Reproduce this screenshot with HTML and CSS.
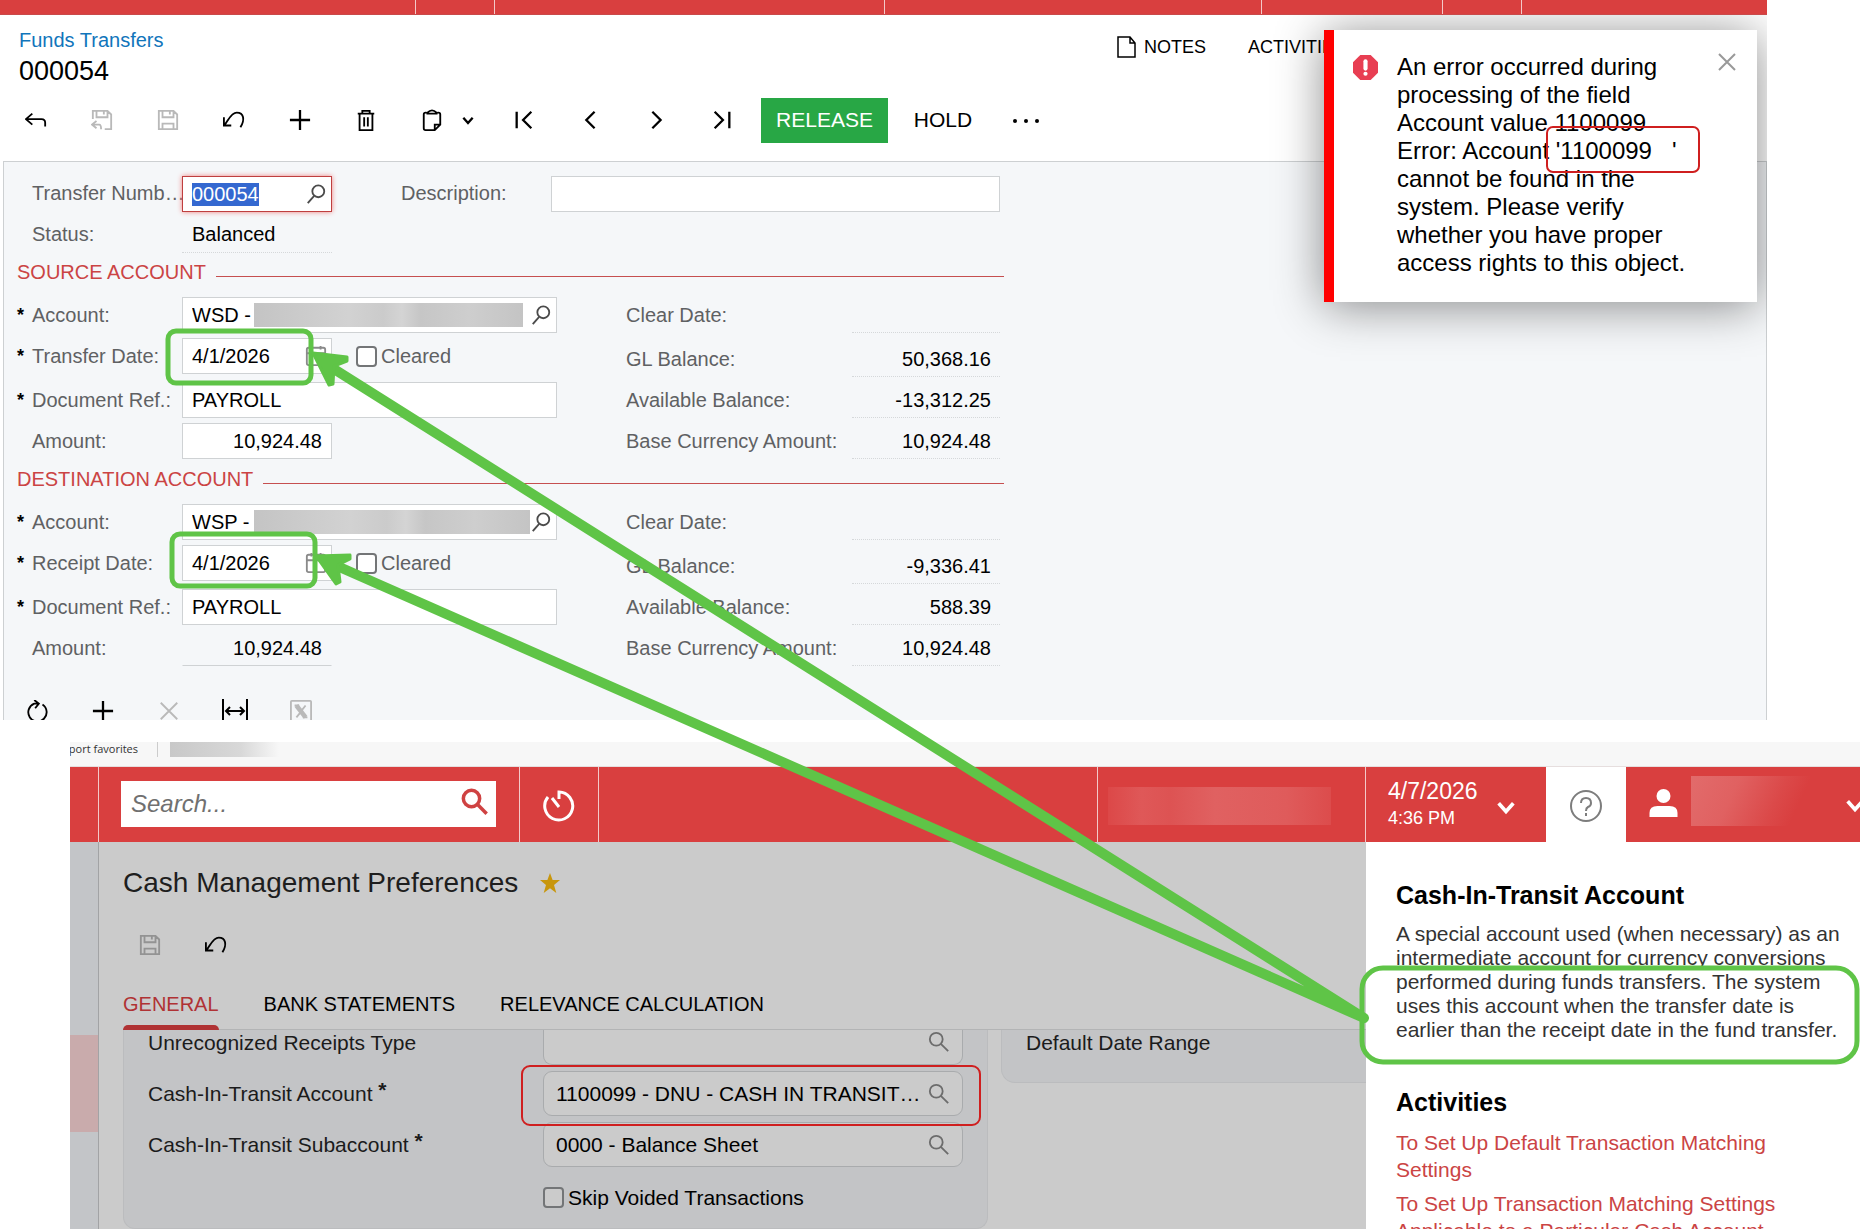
FILE: index.html
```html
<!DOCTYPE html>
<html lang="en">
<head>
  <meta charset="UTF-8" />
  <title>Funds Transfers</title>
  <link rel="stylesheet" href="styles.css">
</head>
<body>
  <!-- Shared icon shapes -->
  <svg class="sprite" aria-hidden="true">
    <symbol id="i-save" viewBox="0 0 24 24"><path d="M2 2h16l4 4v16H2zM6 2v7h12V2M14 2v4M6 22v-6h12v6"/></symbol>
    <symbol id="i-undo" viewBox="0 0 24 24"><path d="M2 17C6 12 9 4 15 4c8 0 9 8 4 16M1 9v9h8"/></symbol>
    <symbol id="i-plus" viewBox="0 0 24 24"><path d="M12 1v22M1 12h22"/></symbol>
    <symbol id="i-find" viewBox="0 0 24 24"><circle cx="14.500" cy="9" r="6.500"/><path d="M10 14l-7 8"/></symbol>
    <symbol id="i-search" viewBox="0 0 24 24"><circle cx="9" cy="9" r="7"/><path d="M14 14l8 8"/></symbol>
    <symbol id="i-cal" viewBox="0 0 24 24"><rect x="2" y="3" width="20" height="19" rx="2"/><path d="M2 9h20M7 1v4M17 1v4"/></symbol>
    <symbol id="i-down" viewBox="0 0 24 24"><path d="M4 8l8 9 8-9"/></symbol>
  </svg>

  <!-- Funds transfer form -->
  <div class="transfers">
    <div class="top-strip">
      <span class="strip-a"></span><span class="strip-b"></span><span class="strip-c"></span><span class="strip-d"></span><span class="strip-e"></span><span class="strip-b"></span>
    </div>

    <div class="transfers-body">
      <div class="page-head">
        <div>
          <a class="crumb" href="#">Funds Transfers</a>
          <h1 class="record-title">000054</h1>
        </div>
        <div class="head-links">
          <button class="head-link"><svg class="note-icon" viewBox="0 0 20 22"><path d="M1 1h12l5 6v14H1zM13 1v6h5"/></svg>NOTES</button>
          <button class="head-link">ACTIVITIES</button>
        </div>
      </div>

      <div class="toolbar main-toolbar">
        <button class="tool" aria-label="Back"><svg class="icon" viewBox="0 0 24 24"><path d="M8 5l-7 6 7 6M1 11h17q4 0 4 4v4"/></svg></button>
        <button class="tool muted" aria-label="Save and close"><svg class="icon" viewBox="0 0 24 24"><path d="M2 11V2h16l4 4v16h-7M6 2v7h12V2M14 2v4M6 13l-5 4 5 4M1 17h8q2 0 2 5"/></svg></button>
        <button class="tool muted" aria-label="Save"><svg class="icon"><use href="#i-save"/></svg></button>
        <button class="tool" aria-label="Undo"><svg class="icon"><use href="#i-undo"/></svg></button>
        <button class="tool" aria-label="Add"><svg class="icon bold"><use href="#i-plus"/></svg></button>
        <button class="tool" aria-label="Delete"><svg class="icon" viewBox="0 0 24 24"><path d="M3 5h18M8 5V2h8v3M5 5v18h14V5M10 9v10M14 9v10"/></svg></button>
        <button class="tool clip" aria-label="Clipboard">
          <svg class="icon" viewBox="0 0 24 24"><path d="M6 4H5q-2 0-2 2v15q0 2 2 2h10l6-6V6q0-2-2-2h-1M7 5V4q5-5 10 0v1zM15 23v-6h6"/></svg>
          <svg class="icon small bold"><use href="#i-down"/></svg>
        </button>
        <button class="tool" aria-label="First"><svg class="icon bold" viewBox="0 0 24 24"><path d="M4 3v18M20 3l-9 9 9 9"/></svg></button>
        <button class="tool" aria-label="Previous"><svg class="icon bold" viewBox="0 0 24 24"><path d="M17 3l-9 9 9 9"/></svg></button>
        <button class="tool" aria-label="Next"><svg class="icon bold" viewBox="0 0 24 24"><path d="M8 3l9 9-9 9"/></svg></button>
        <button class="tool" aria-label="Last"><svg class="icon bold" viewBox="0 0 24 24"><path d="M20 3v18M4 3l9 9-9 9"/></svg></button>
        <button class="release">RELEASE</button>
        <button class="hold">HOLD</button>
        <button class="tool more" aria-label="More"><svg class="dots" viewBox="0 0 28 6"><circle cx="3" cy="4" r="2"/><circle cx="14" cy="4" r="2"/><circle cx="25" cy="4" r="2"/></svg></button>
      </div>

      <div class="panel">
        <div class="form">
          <div class="row">
            <label class="label" for="nbr"><span class="req"></span>Transfer Numb…</label>
            <div class="field short active"><input id="nbr" type="text" value="000054"><button class="pick" aria-label="Find"><svg class="icon"><use href="#i-find"/></svg></button></div>
            <label class="label desc" for="descr">Description:</label>
            <div class="field descr"><input id="descr" type="text"></div>
          </div>
          <div class="row">
            <span class="label"><span class="req"></span>Status:</span>
            <span class="static status">Balanced</span>
          </div>

          <h2 class="section-title">SOURCE ACCOUNT</h2>
          <div class="account">
            <label class="label" for="srcAcct"><span class="req">*</span>Account:</label>
            <div class="field"><input id="srcAcct" class="code" type="text" value="WSD -"><span class="redacted"></span><button class="pick wide" aria-label="Find"><svg class="icon"><use href="#i-find"/></svg></button></div>
            <span class="label right">Clear Date:</span>
            <span class="static"></span>

            <label class="label top" for="srcDate"><span class="req">*</span>Transfer Date:</label>
            <div class="date-cell">
              <div class="field short"><input id="srcDate" type="text" value="4/1/2026"><button class="pick cal" aria-label="Calendar"><svg class="icon"><use href="#i-cal"/></svg></button></div>
              <label class="check"><input type="checkbox">Cleared</label>
            </div>
            <span class="label right bottom">GL Balance:</span>
            <span class="static bottom">50,368.16</span>

            <label class="label" for="srcRef"><span class="req">*</span>Document Ref.:</label>
            <div class="field"><input id="srcRef" type="text" value="PAYROLL"></div>
            <span class="label right">Available Balance:</span>
            <span class="static">-13,312.25</span>

            <label class="label" for="srcAmt"><span class="req"></span>Amount:</label>
            <div class="field short"><input id="srcAmt" class="num" type="text" value="10,924.48"></div>
            <span class="label right">Base Currency Amount:</span>
            <span class="static">10,924.48</span>
          </div>

          <h2 class="section-title">DESTINATION ACCOUNT</h2>
          <div class="account">
            <label class="label" for="dstAcct"><span class="req">*</span>Account:</label>
            <div class="field"><input id="dstAcct" class="code" type="text" value="WSP -"><span class="redacted"></span><button class="pick" aria-label="Find"><svg class="icon"><use href="#i-find"/></svg></button></div>
            <span class="label right">Clear Date:</span>
            <span class="static"></span>

            <label class="label top" for="dstDate"><span class="req">*</span>Receipt Date:</label>
            <div class="date-cell">
              <div class="field short"><input id="dstDate" type="text" value="4/1/2026"><button class="pick cal" aria-label="Calendar"><svg class="icon"><use href="#i-cal"/></svg></button></div>
              <label class="check"><input type="checkbox">Cleared</label>
            </div>
            <span class="label right bottom">GL Balance:</span>
            <span class="static bottom">-9,336.41</span>

            <label class="label" for="dstRef"><span class="req">*</span>Document Ref.:</label>
            <div class="field"><input id="dstRef" type="text" value="PAYROLL"></div>
            <span class="label right">Available Balance:</span>
            <span class="static">588.39</span>

            <label class="label" for="dstAmt"><span class="req"></span>Amount:</label>
            <div class="field short readonly"><input id="dstAmt" class="num" type="text" value="10,924.48" readonly></div>
            <span class="label right">Base Currency Amount:</span>
            <span class="static">10,924.48</span>
          </div>
        </div>

        <div class="toolbar grid-toolbar">
          <button class="tool" aria-label="Refresh"><svg class="icon" viewBox="0 0 24 24"><path d="M18 5a10 10 0 1 1-9-1h5M9 0l5 4-4 5"/></svg></button>
          <button class="tool" aria-label="Add row"><svg class="icon bold"><use href="#i-plus"/></svg></button>
          <button class="tool muted" aria-label="Delete row"><svg class="icon" viewBox="0 0 24 24"><path d="M3 3l18 18M21 3L3 21"/></svg></button>
          <button class="tool" aria-label="Fit columns"><svg class="icon wide-icon" viewBox="0 0 26 24"><path d="M1 0v24M25 0v24M4 12h18M8 8l-4 4 4 4M18 8l4 4-4 4"/></svg></button>
          <button class="tool muted" aria-label="Export to Excel"><svg class="icon" viewBox="0 0 24 24"><rect x="1" y="1" width="22" height="23" rx="1"/><path class="thick" d="M7 6l10 13"/><path d="M17 6l-4 5M11 14l-4 5M5 6h5M14 19h5"/></svg></button>
        </div>
      </div>

      <!-- Error message -->
      <div class="toast" role="alert">
        <svg class="toast-icon" viewBox="0 0 24 24"><path class="oct" d="M7 0h10l7 7v10l-7 7H7l-7-7V7z"/><rect x="10" y="4" width="4" height="11" rx="2"/><circle cx="12" cy="18" r="2"/></svg>
        <p class="toast-text">An error occurred during processing of the field Account value 1100099 Error: Account '1100099&nbsp;&nbsp; ' cannot be found in the system. Please verify whether you have proper access rights to this object.</p>
        <button class="toast-close" aria-label="Close"><svg viewBox="0 0 18 18"><path d="M1 1l16 16M17 1L1 17"/></svg></button>
      </div>
    </div>
  </div>

  <!-- Preferences screen -->
  <div class="prefs">
    <div class="favorites">
      <span class="fav-text">Import favorites</span>
      <span class="fav-redacted"></span>
    </div>

    <div class="app-bar">
      <div class="bar-edge"></div>
      <div class="bar-search">
        <div class="search-box"><input type="text" placeholder="Search..." aria-label="Search"><button aria-label="Search"><svg class="icon"><use href="#i-search"/></svg></button></div>
      </div>
      <button class="bar-recent" aria-label="Recent"><svg viewBox="0 0 34 34"><path d="M6 8a14 14 0 1 0 11-5v7M10 9l7 9"/></svg></button>
      <div class="bar-space"></div>
      <div class="bar-company"><span class="blurred"></span></div>
      <button class="bar-date"><span><span class="date">4/7/2026</span><span class="time">4:36 PM</span></span><svg class="icon"><use href="#i-down"/></svg></button>
      <button class="bar-help" aria-label="Help"><svg viewBox="0 0 34 34"><circle cx="17" cy="17" r="15"/><path d="M12 14q0-5 5-5t5 5q0 3-3 4-2 1-2 4M17 24v3"/></svg></button>
      <button class="bar-user" aria-label="User"><svg class="user-icon" viewBox="0 0 28 28"><circle cx="14" cy="7" r="7"/><path d="M0 28v-4q0-7 8-7h12q8 0 8 7v4z"/></svg><span class="blurred"></span><svg class="icon"><use href="#i-down"/></svg></button>
    </div>

    <div class="prefs-body">
      <div class="side-nav"><div class="side-current"></div></div>

      <div class="prefs-main">
        <h1 class="prefs-title">Cash Management Preferences <svg viewBox="0 0 20 20"><path d="M10 0l2.600 7H20l-6 5 2.300 8L10 15.200 3.700 20 6 12 0 7h7.400z"/></svg></h1>
        <div class="toolbar prefs-toolbar">
          <button class="tool muted" aria-label="Save"><svg class="icon"><use href="#i-save"/></svg></button>
          <button class="tool" aria-label="Undo"><svg class="icon"><use href="#i-undo"/></svg></button>
        </div>
        <div class="tabs">
          <button class="tab current">GENERAL</button>
          <button class="tab">BANK STATEMENTS</button>
          <button class="tab">RELEVANCE CALCULATION</button>
        </div>
        <div class="cards">
          <div class="card card-left">
            <div class="pref-row cut">
              <label for="urt">Unrecognized Receipts Type</label>
              <div class="pref-field"><input id="urt" type="text"><svg class="icon"><use href="#i-search"/></svg></div>
            </div>
            <div class="pref-row">
              <label for="cit">Cash-In-Transit Account <b>*</b></label>
              <div class="pref-field"><input id="cit" type="text" value="1100099 - DNU - CASH IN TRANSIT…"><svg class="icon"><use href="#i-search"/></svg></div>
            </div>
            <div class="pref-row">
              <label for="cis">Cash-In-Transit Subaccount <b>*</b></label>
              <div class="pref-field"><input id="cis" type="text" value="0000 - Balance Sheet"><svg class="icon"><use href="#i-search"/></svg></div>
            </div>
            <label class="check skip"><input type="checkbox">Skip Voided Transactions</label>
          </div>
          <div class="card card-right">Default Date Range</div>
        </div>
      </div>

      <div class="help">
        <h2>Cash-In-Transit Account</h2>
        <p>A special account used (when necessary) as an intermediate account for currency conversions performed during funds transfers. The system uses this account when the transfer date is earlier than the receipt date in the fund transfer.</p>
        <h2>Activities</h2>
        <a href="#">To Set Up Default Transaction Matching Settings</a>
        <a href="#">To Set Up Transaction Matching Settings Applicable to a Particular Cash Account</a>
      </div>
    </div>
  </div>

  <!-- Markup drawn over both screens -->
  <svg class="markup" viewBox="0 0 1860 1229" aria-hidden="true">
    <g class="green">
      <rect x="168" y="331" width="143" height="52" rx="8"/>
      <rect x="172" y="534" width="143" height="52" rx="8"/>
      <rect x="1362" y="968" width="495" height="94" rx="21"/>
      <path class="shaft" d="M326 364L1364 1018L328 562"/>
      <path class="head" d="M313 353L347 357L347 361L334 366L333 384L329 385Z"/>
      <path class="head" d="M316 556L350 555L350 559L338 565L340 582L336 584Z"/>
    </g>
    <g class="red">
      <rect x="1547" y="127" width="152" height="45" rx="6"/>
      <rect x="522" y="1066" width="458" height="59" rx="8"/>
    </g>
  </svg>

  <script>
    // transfer number starts selected
    const nbr = document.getElementById('nbr');
    nbr.focus();
    nbr.select();
  </script>
</body>
</html>
```

FILE: styles.css
```css
* {
  margin: 0;
  padding: 0;
  box-sizing: border-box;
}

body {
  position: relative;
  display: flex;
  flex-direction: column;
  height: 100vh;
  overflow: hidden;
  background-color: #fff;
  color: #000;
  font-family: "Liberation Sans", Arial, sans-serif;
  font-size: 20px;
  line-height: 24px;
}

button,
input {
  font: inherit;
  color: inherit;
  border: none;
  background: none;
  outline: none;
}

svg {
  display: block;
  flex: none;
  fill: none;
  stroke: currentColor;
}

a {
  text-decoration: none;
}

.sprite {
  position: absolute;
  width: 0;
  height: 0;
}

.icon {
  width: 22px;
  height: 22px;
  stroke-width: 2;
}

.icon.bold {
  stroke-width: 2.5;
}

.icon.small {
  width: 14px;
  height: 14px;
  stroke-width: 4;
}

.icon.wide-icon {
  width: 26px;
  height: 24px;
}

/* Funds transfer window */
.transfers {
  width: 95%;
  flex: none;
}

.top-strip {
  display: flex;
  height: 15px;
  background-color: #d93f3f;
  border-bottom: 1px solid #c94a4a;
}

.top-strip span {
  border-right: 1px solid #f3c9c9;
}

.strip-a { width: 416px; }
.strip-b { width: 79px; }
.strip-c { width: 390px; }
.strip-d { width: 377px; }
.strip-e { width: 181px; }

.transfers-body {
  position: relative;
  overflow: hidden;
}

.page-head {
  display: flex;
  justify-content: space-between;
  padding: 13px 421px 0 19px;
}

.crumb {
  display: block;
  color: #1175bb;
}

.record-title {
  margin-top: 3px;
  font-size: 27px;
  font-weight: normal;
  line-height: 32px;
}

.head-links {
  display: flex;
  align-items: flex-start;
  gap: 42px;
  padding-top: 7px;
}

.head-link {
  display: flex;
  align-items: center;
  gap: 7px;
  font-size: 18px;
}

.note-icon {
  width: 20px;
  height: 22px;
  stroke-width: 1.5;
}

.toolbar {
  display: flex;
}

.main-toolbar {
  height: 45px;
  margin: 11px 0 18px 3px;
}

.main-toolbar button {
  padding-bottom: 2px;
}

.tool {
  display: flex;
  align-items: center;
  justify-content: center;
  width: 66px;
}

.muted {
  color: #b9b9b9;
}

.clip {
  justify-content: flex-start;
  width: 92px;
  padding-left: 22px;
  gap: 18px;
}

.release {
  width: 127px;
  margin-left: 6px;
  background-color: #28a745;
  color: #fff;
  font-size: 21px;
}

.hold {
  width: 110px;
  font-size: 21px;
}

.more {
  width: 56px;
}

.dots {
  width: 28px;
  height: 6px;
  fill: #000;
  stroke: none;
}

.panel {
  margin-left: 3px;
  border: 1px solid #cdd0d2;
  border-bottom: none;
  background-color: #f5f7f9;
}

.form {
  width: 1000px;
  padding: 14px 0 0 13px;
}

.row {
  display: flex;
  height: 36px;
  margin-bottom: 5px;
}

.label {
  display: flex;
  align-items: center;
  flex: none;
  width: 165px;
  height: 36px;
  color: #5f6163;
  white-space: nowrap;
}

.row .label,
.row input {
  padding-bottom: 2px;
}

.label.right {
  padding-left: 69px;
  width: auto;
}

.label.desc {
  width: 150px;
  margin-left: 69px;
}

.top {
  align-self: start;
}

.bottom {
  align-self: end;
}

.req {
  flex: none;
  width: 15px;
  color: #000;
  font-size: 18px;
  font-weight: bold;
}

.field {
  display: flex;
  align-items: center;
  height: 36px;
  border: 1px solid #cfd2d4;
  background-color: #fff;
}

.field input {
  flex: 1;
  min-width: 0;
  height: 34px;
  padding: 0 9px;
}

.field.short {
  width: 150px;
}

.field.descr {
  width: 449px;
}

.field.active {
  border-color: #bf3f3f;
  box-shadow: 0 0 5px #f08080;
}

.field.readonly {
  background: none;
  border-color: transparent transparent #cfd2d4;
}

.field input::selection {
  background-color: #3468d0;
  color: #fff;
}

.field .code {
  flex: none;
  width: 71px;
  padding-right: 0;
}

.field .num {
  text-align: right;
}

.redacted {
  flex: 1;
  height: 24px;
  background: linear-gradient(90deg, #c4c4c4, #d2d2d2 35%, #cbcbcb 48%, #d4d4d4 55%, #c6c6c6 62%, #cecece 80%, #c4c4c4);
}

.pick {
  padding-right: 4px;
  color: #4b4b4b;
}

.pick.cal {
  color: #8a8a8a;
}

.pick.wide {
  padding-left: 7px;
}

.static {
  height: 36px;
  padding-right: 9px;
  border-bottom: 1px dotted #d5d8da;
  line-height: 36px;
  text-align: right;
}

.status {
  width: 150px;
  padding-left: 10px;
  line-height: 34px;
  text-align: left;
}

.section-title {
  display: flex;
  align-items: center;
  gap: 10px;
  margin: 8px 0 13px;
  color: #cb4444;
  font-size: 20px;
  font-weight: normal;
}

.row + .section-title {
  margin-top: 7px;
}

.section-title::after {
  content: "";
  flex: 1;
  height: 1px;
  margin-top: 9px;
  background-color: #c64f50;
}

.account {
  display: grid;
  grid-template-columns: 165px 375px 295px 148px;
  grid-template-rows: 36px 39px 36px 36px;
  row-gap: 5px;
}

.date-cell {
  display: flex;
  gap: 24px;
  height: 36px;
}

.check {
  display: flex;
  align-items: center;
  gap: 4px;
  color: #5f6163;
}

.check input {
  appearance: none;
  width: 21px;
  height: 21px;
  border: 2px solid #737577;
  border-radius: 4px;
  background-color: #fff;
}

/* cut off by the end of the window */
.grid-toolbar {
  height: 28px;
  margin-top: 26px;
  overflow: hidden;
}

.grid-toolbar .tool {
  height: 38px;
}

.thick {
  stroke-width: 5;
}

/* Error message */
.toast {
  position: absolute;
  top: 15px;
  right: 10px;
  display: flex;
  align-items: flex-start;
  width: 433px;
  padding: 23px 21px 25px 19px;
  border-left: 10px solid #f00;
  background-color: #fff;
  box-shadow: 0 4px 45px rgba(0, 0, 0, 0.45);
}

.toast-icon {
  width: 25px;
  height: 25px;
  margin: 2px 19px 0 0;
  fill: #fff;
  stroke: none;
}

.oct {
  fill: #e83e52;
}

.toast-text {
  flex: 0 0 300px;
  font-size: 24px;
  line-height: 28px;
}

.toast-close {
  margin-left: auto;
  color: #999;
}

.toast-close svg {
  width: 18px;
  height: 18px;
  stroke-width: 2;
}

/* Preferences window */
.prefs {
  display: flex;
  flex-direction: column;
  flex: 1;
  min-height: 0;
  margin: 22px 0 0 70px;
}

.favorites {
  display: flex;
  height: 25px;
  border-bottom: 1px solid #e6dede;
  background-color: #f7f7f7;
}

.fav-text {
  display: flex;
  justify-content: flex-end;
  width: 68px;
  overflow: hidden;
  color: #333;
  font-family: "Open Sans", sans-serif;
  font-size: 11px;
  line-height: 14px;
  white-space: nowrap;
}

.fav-redacted {
  width: 122px;
  height: 15px;
  margin-left: 19px;
  padding-left: 12px;
  border-left: 1px solid #ccc;
  background: linear-gradient(90deg, #c8c8c8, #d8d8d8 65%, #f7f7f7) content-box;
}

.app-bar {
  display: flex;
  flex: none;
  height: 75px;
  background-color: #d93f3f;
  color: #fff;
}

.bar-edge,
.bar-search,
.bar-recent,
.bar-space,
.bar-company {
  border-right: 1px solid #f3c9c9;
}

.bar-edge {
  width: 29px;
}

.bar-search {
  width: 421px;
  padding: 14px 23px 14px 22px;
}

.search-box {
  display: flex;
  height: 46px;
  padding: 0 7px 0 10px;
  background-color: #fff;
  color: #cf4242;
}

.search-box input {
  flex: 1;
  min-width: 0;
  font-size: 24px;
  font-style: italic;
}

.search-box input::placeholder {
  color: #707070;
}

.search-box .icon {
  width: 28px;
  height: 28px;
  margin-bottom: 4px;
  stroke-width: 3;
}

.bar-recent,
.bar-help {
  display: flex;
  align-items: center;
  justify-content: center;
  padding-top: 3px;
}

.bar-recent {
  width: 79px;
}

.bar-recent svg,
.bar-help svg {
  width: 34px;
  height: 34px;
  stroke-width: 3;
}

.bar-space {
  flex: 1;
}

.bar-company {
  width: 268px;
  padding: 20px 34px 17px 10px;
}

.blurred {
  display: block;
  height: 38px;
  background: linear-gradient(90deg, #dc4848, #df5858 15%, #dd5353 28%, #e06161 48%, #df5b5b 80%, #dc4c4c);
}

.bar-date {
  display: flex;
  align-items: center;
  gap: 17px;
  width: 180px;
  padding-left: 22px;
  padding-bottom: 2px;
  text-align: left;
}

.date {
  display: block;
  font-size: 23px;
  line-height: 28px;
}

.time {
  display: block;
  font-size: 18px;
  line-height: 26px;
}

.bar-date .icon,
.bar-user .icon {
  stroke-width: 4;
}

.bar-date .icon {
  margin-top: 6px;
}

.bar-help {
  width: 80px;
  background-color: #fff;
  color: #7d7d7d;
}

.bar-help svg {
  stroke-width: 2;
}

.bar-user {
  display: flex;
  align-items: center;
  width: 234px;
  padding-left: 23px;
  overflow: hidden;
}

.user-icon {
  width: 29px;
  height: 28px;
  margin-bottom: 4px;
  fill: #fff;
  stroke: none;
}

.bar-user .blurred {
  flex: none;
  width: 119px;
  height: 50px;
  margin: 0 34px 8px 13px;
  background: linear-gradient(115deg, #e26b6b, #e06161 35%, #db4949 68%, #d93f3f 85%);
}

.prefs-body {
  display: flex;
  flex: 1;
  min-height: 0;
  overflow: hidden;
  background-color: #cbcbcb;
}

.side-nav {
  width: 29px;
  padding-top: 193px;
  border-right: 1px solid #a2a3a5;
  background-color: #c3c5c8;
}

.side-current {
  height: 97px;
  background-color: #c9abac;
}

.prefs-main {
  flex: 1;
  padding: 23px 0 0 24px;
}

.prefs-title {
  display: flex;
  align-items: center;
  gap: 22px;
  color: #1e1e1e;
  font-size: 28px;
  font-weight: normal;
  line-height: 36px;
}

.prefs-title svg {
  width: 20px;
  height: 20px;
  fill: #c8960c;
  stroke: none;
}

.prefs-toolbar {
  height: 38px;
  margin: 25px 0 28px -6px;
}

.prefs-toolbar .muted {
  color: #939393;
}

.tabs {
  display: flex;
  gap: 45px;
  height: 38px;
  border-bottom: 1px solid #b3b4b5;
}

.tab {
  display: flex;
  height: 38px;
}

.tab.current {
  flex-direction: column;
  justify-content: space-between;
  color: #b03234;
}

.tab.current::after {
  content: "";
  width: 100%;
  height: 5px;
  border-radius: 5px 5px 0 0;
  background-color: #b03234;
}

.cards {
  display: flex;
  align-items: flex-start;
  gap: 13px;
  font-size: 21px;
}

.card {
  border: 1px solid #bbbcbe;
  border-top: none;
  background-color: #c3c4c6;
  color: #1b1b1b;
}

.card-left {
  width: 865px;
  padding: 0 24px 20px;
  border-radius: 0 0 12px 12px;
}

.card-right {
  flex: 1;
  height: 53px;
  padding: 1px 24px;
  border-right: none;
  border-radius: 0 0 0 14px;
}

.pref-row {
  display: flex;
  justify-content: space-between;
  align-items: center;
  margin-bottom: 6px;
}

.pref-row b {
  line-height: 0;
  vertical-align: 4px;
}

.pref-field {
  display: flex;
  align-items: center;
  width: 420px;
  height: 45px;
  padding: 0 12px;
  border: 1px solid #a9abad;
  border-radius: 9px;
  background-color: #cbcbcb;
  color: #000;
}

.pref-field input {
  flex: 1;
  min-width: 0;
  height: 40px;
}

.pref-field .icon {
  color: #6c6c6c;
}

/* first row is scrolled half under the tabs */
.pref-row.cut,
.cut .pref-field {
  align-items: flex-start;
}

.cut label {
  padding-top: 1px;
}

.cut .pref-field {
  height: 35px;
  border-top: none;
  border-radius: 0 0 9px 9px;
}

.cut .pref-field input {
  height: 26px;
}

.cut .pref-field .icon {
  margin-top: 1px;
}

.skip {
  width: 420px;
  margin: 20px 0 0 auto;
  color: #000;
  line-height: 21px;
}

.skip input {
  background-color: #cbcbcb;
}

.help {
  width: 494px;
  padding: 37px 14px 0 30px;
  background-color: #fff;
  color: #333;
  font-size: 21px;
}

.help h2 {
  color: #000;
  font-size: 25px;
  line-height: 32px;
}

.help p {
  margin: 11px 0 44px;
}

.help a {
  display: block;
  margin: 11px 20px -4px 0;
  color: #cb4444;
  line-height: 27px;
}

/* Markup */
.markup {
  position: absolute;
  top: 0;
  left: 0;
  width: 1860px;
  height: 1229px;
  pointer-events: none;
}

.green {
  stroke: #5fc447;
  stroke-width: 5;
}

.shaft {
  stroke-width: 10;
  stroke-linecap: round;
  stroke-linejoin: round;
}

.head {
  fill: #5fc447;
  stroke-width: 3;
  stroke-linejoin: round;
}

.red {
  stroke: #cf1f1f;
  stroke-width: 2;
}
```
